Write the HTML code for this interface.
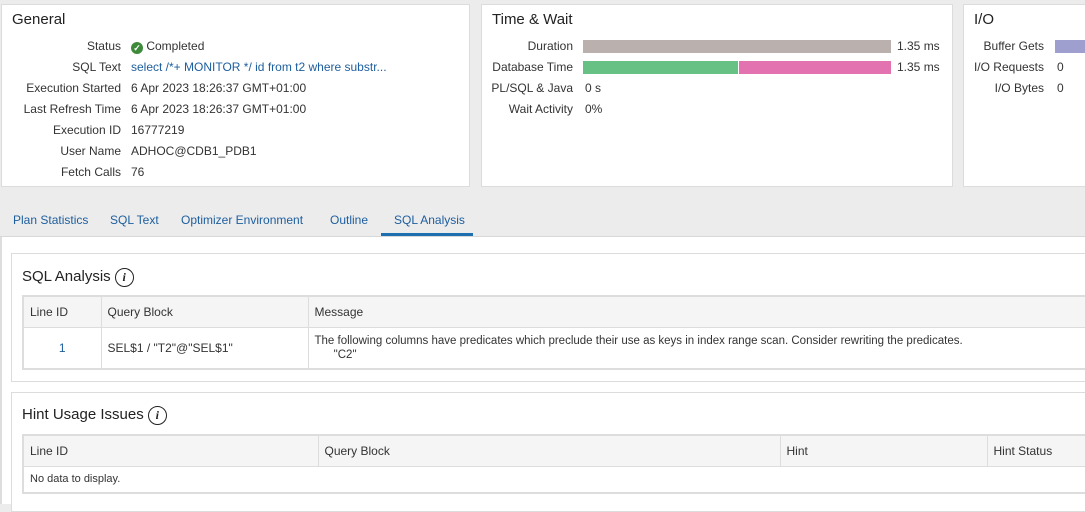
<!DOCTYPE html>
<html><head><style>
*{box-sizing:border-box;margin:0;padding:0}
body{width:1085px;height:504px;overflow:hidden;background:#ececec;font-family:"Liberation Sans",sans-serif;font-size:12px;color:#333;position:relative}
.card{position:absolute;background:#fff;border:1px solid #dcdcdc}
.t{position:absolute;font-size:15px;color:#222}
.l{position:absolute;text-align:right;color:#333}
.v{position:absolute;color:#333}
.a{position:absolute}
.bar{position:absolute;height:13px}
.info{display:inline-block;width:19px;height:19px;border:1.5px solid #222;border-radius:50%;text-align:center;font:italic bold 12px "Liberation Serif",serif;line-height:16px;vertical-align:-2px;margin-left:4px;position:relative;top:-2px}
table{border-collapse:collapse;position:absolute;background:#fff}
td{border:1px solid #ddd;padding:0 6px;vertical-align:middle}
</style></head><body>
<div class="card" style="left:1px;top:4px;width:469px;height:183px">
<div class="t" style="left:10px;top:6px">General</div>
</div>
<div class="l" style="left:0;width:121px;top:36px;line-height:21px">Status<br>SQL Text<br>Execution Started<br>Last Refresh Time<br>Execution ID<br>User Name<br>Fetch Calls</div>
<div class="v" style="left:131px;top:36px;line-height:21px"><span style="display:inline-block;width:12px;height:12px;border-radius:50%;background:#3e8a3b;color:#fff;font-size:9px;line-height:12px;text-align:center;vertical-align:-1px;font-weight:bold">✓</span> Completed<br><span style="color:#1d5e9e">select /*+ MONITOR */ id from t2 where substr...</span><br>6 Apr 2023 18:26:37 GMT+01:00<br>6 Apr 2023 18:26:37 GMT+01:00<br>16777219<br>ADHOC@CDB1_PDB1<br>76</div>

<div class="card" style="left:481px;top:4px;width:472px;height:183px">
<div class="t" style="left:10px;top:6px">Time &amp; Wait</div>
</div>
<div class="l" style="left:480px;width:93px;top:36px;line-height:21px">Duration<br>Database Time<br>PL/SQL &amp; Java<br>Wait Activity</div>
<div class="bar" style="left:583px;top:40px;width:308px;background:#bab0ad"></div>
<div class="bar" style="left:583px;top:61px;width:155px;background:#67c184"></div>
<div class="bar" style="left:739px;top:61px;width:152px;background:#e272b0"></div>
<div class="v" style="left:897px;top:36px;line-height:21px">1.35 ms<br>1.35 ms</div>
<div class="v" style="left:585px;top:78px;line-height:21px">0 s<br>0%</div>

<div class="card" style="left:963px;top:4px;width:140px;height:183px">
<div class="t" style="left:10px;top:6px">I/O</div>
</div>
<div class="l" style="left:960px;width:84px;top:36px;line-height:21px">Buffer Gets<br>I/O Requests<br>I/O Bytes</div>
<div class="bar" style="left:1055px;top:40px;width:40px;background:#9e9ecf"></div>
<div class="v" style="left:1057px;top:57px;line-height:21px">0<br>0</div>

<div class="a" style="left:13px;top:213px;color:#1d5e9e">Plan Statistics</div>
<div class="a" style="left:110px;top:213px;color:#1d5e9e">SQL Text</div>
<div class="a" style="left:181px;top:213px;color:#1d5e9e">Optimizer Environment</div>
<div class="a" style="left:330px;top:213px;color:#1d5e9e">Outline</div>
<div class="a" style="left:394px;top:213px;color:#1d5e9e">SQL Analysis</div>
<div class="a" style="left:381px;top:233px;width:92px;height:3px;background:#1d6fb0"></div>
<div class="a" style="left:0;top:236px;width:1085px;height:1px;background:#d8d8d8"></div>
<div class="a" style="left:0;top:237px;width:1085px;height:267px;background:#fff;border-left:2px solid #ddd"></div>

<div class="card" style="left:11px;top:253px;width:1090px;height:129px">
<div class="t" style="left:10px;top:14px">SQL Analysis<span class="info">i</span></div>
</div>
<table style="left:22px;top:295px;width:1080px;border:2px solid #ddd">
<tr style="height:31px;background:#f5f5f5"><td style="width:78px">Line ID</td><td style="width:207px">Query Block</td><td>Message</td></tr>
<tr style="height:42px"><td style="text-align:center;color:#1d5e9e">1</td><td>SEL$1 / "T2"@"SEL$1"</td><td style="font-size:11.5px;line-height:14px">The following columns have predicates which preclude their use as keys in index range scan. Consider rewriting the predicates.<br>&nbsp;&nbsp;&nbsp;&nbsp;&nbsp;&nbsp;"C2"</td></tr>
</table>

<div class="card" style="left:11px;top:392px;width:1090px;height:120px">
<div class="t" style="left:10px;top:13px">Hint Usage Issues<span class="info">i</span></div>
</div>
<table style="left:22px;top:434px;width:1080px;border:2px solid #ddd">
<tr style="height:31px;background:#f5f5f5"><td style="width:295px">Line ID</td><td style="width:462px">Query Block</td><td style="width:207px">Hint</td><td>Hint Status</td></tr>
<tr style="height:27px"><td colspan="4" style="font-size:11px">No data to display.</td></tr>
</table>
</body></html>
